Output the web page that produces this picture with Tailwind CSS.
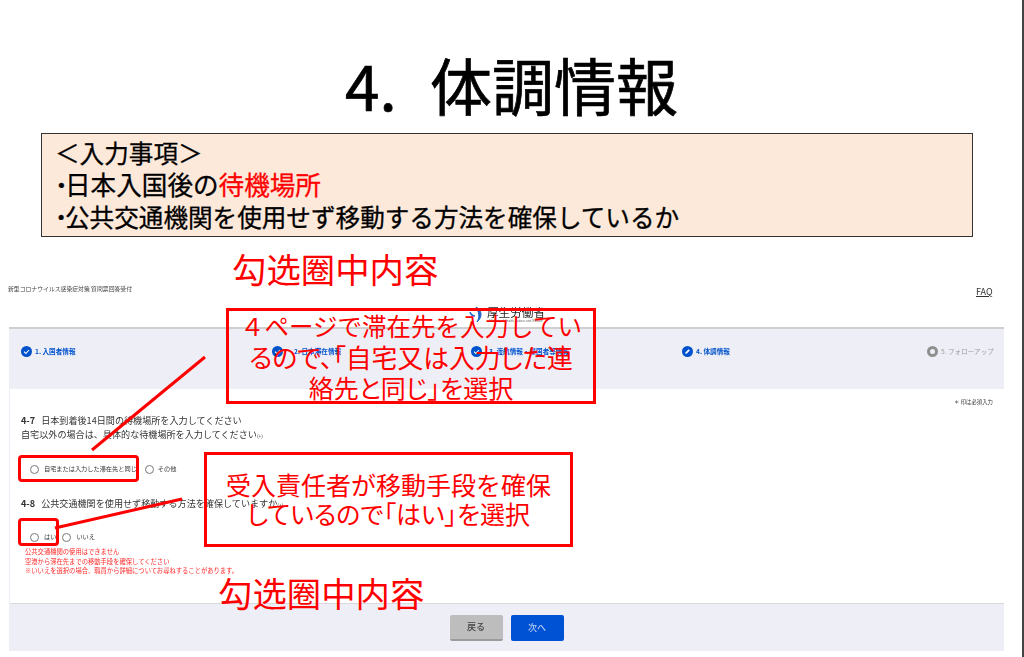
<!DOCTYPE html>
<html lang="ja">
<head>
  <meta charset="UTF-8">
  <title>4. 体調情報</title>
  <script src="https://cdn.jsdelivr.net/npm/@tailwindcss/browser@4"></script>
</head>
<body class="relative w-[1024px] h-[657px] overflow-hidden bg-white font-['Noto_Sans_CJK_JP',sans-serif] text-black">

  <!-- Slide title -->
  <h1 class="h-[133px] pt-[40px] pl-[345px] text-[62px] leading-[88px] font-normal [-webkit-text-stroke-width:0.7px] whitespace-nowrap"><span class="inline-block w-[85px]">4.</span>体調情報</h1>

  <!-- Input items box -->
  <div class="ml-[41px] w-[932px] h-[104px] border border-[#333] bg-[#fce9da] pl-[13px] pt-[2px] text-[24.6px] leading-[32px] [-webkit-text-stroke-width:0.3px] whitespace-nowrap">
    <p>＜入力事項＞</p>
    <p class="flex text-[25.6px]"><span class="w-[10px] font-bold">･</span>日本入国後の<span class="text-[#ff0000]">待機場所</span></p>
    <p class="flex"><span class="w-[10px] font-bold">･</span>公共交通機関を使用せず移動する方法を確保しているか</p>
  </div>

  <!-- Embedded form screenshot -->
  <div class="blur-[0.4px]">
    <div class="h-[90px] flex items-start pl-[8px] pt-[47px]">
      <p class="w-[460px] text-[5.85px] leading-[9px] text-[#444] whitespace-nowrap">新型コロナウイルス感染症対策 質問票回答受付</p>
      <div class="flex items-center gap-[2px] mt-[22px]">
        <svg class="w-[17px] h-[19px]" viewBox="0 0 17 19"><path d="M8 1c6 3 7 10 1 15 3-5 2-10-1-15z" fill="#1c63c4" stroke="#1c63c4" stroke-width="1"/><path d="M2 6c1 3 3 4 5 4" fill="none" stroke="#1c63c4" stroke-width="1.5"/></svg>
        <div class="flex flex-col items-center -mt-[2px]">
          <span class="text-[11.6px] leading-[13px] text-[#222] whitespace-nowrap">厚生労働省</span>
          <span class="text-[3px] leading-[4px] text-[#666] whitespace-nowrap">Ministry of Health, Labour and Welfare</span>
        </div>
      </div>
      <a class="ml-[431px] mt-[2px] text-[9px] leading-[11px] text-[#333] underline">FAQ</a>
    </div>

    <div class="ml-[9px] w-[995px] h-[324px] bg-[#eeeff6] border-t-2 border-[#cfcfcf] flex flex-col">
      <!-- Steps -->
      <div class="h-[60px] shrink-0 pl-[12px] pt-[17px] grid grid-cols-[251px_199px_211px_245px_auto] items-start text-[6.6px] font-bold text-[#0052cc] whitespace-nowrap">
        <div class="flex items-center gap-[3px]">
          <svg class="w-[11px] h-[11px]" viewBox="0 0 11 11"><circle cx="5.5" cy="5.5" r="5.5" fill="#0052cc"/><path d="M3 5.7l1.8 1.8L8 4" fill="none" stroke="#fff" stroke-width="1.1"/></svg>
          <span>1. 入国者情報</span>
        </div>
        <div class="flex items-center gap-[11px]">
          <svg class="w-[11px] h-[11px]" viewBox="0 0 11 11"><circle cx="5.5" cy="5.5" r="5.5" fill="#0052cc"/><path d="M3 5.7l1.8 1.8L8 4" fill="none" stroke="#fff" stroke-width="1.1"/></svg>
          <span>2. 日本滞在情報</span>
        </div>
        <div class="flex items-center gap-[7px]">
          <svg class="w-[11px] h-[11px]" viewBox="0 0 11 11"><circle cx="5.5" cy="5.5" r="5.5" fill="#0052cc"/><path d="M3 5.7l1.8 1.8L8 4" fill="none" stroke="#fff" stroke-width="1.1"/></svg>
          <span>3. 渡航情報・帰国者等情報</span>
        </div>
        <div class="flex items-center gap-[3px]">
          <svg class="w-[11px] h-[11px]" viewBox="0 0 11 11"><circle cx="5.5" cy="5.5" r="5.5" fill="#0052cc"/><path d="M3.2 7.8l.4-1.6 3-3 1.2 1.2-3 3z" fill="#fff"/></svg>
          <span>4. 体調情報</span>
        </div>
        <div class="flex items-center gap-[3px] font-normal text-[#9a9a9a]">
          <span class="w-[11px] h-[11px] rounded-full border-[3px] border-[#8f8f8f] bg-[#eeeff6]"></span>
          <span>5. フォローアップ</span>
        </div>
      </div>

      <!-- Question card -->
      <div class="ml-[1px] h-[215px] shrink-0 bg-white border-b border-[#d8d8de] pl-[11px] pr-[11px] pt-[9px] text-[#333]">
        <p class="text-right text-[5.4px] leading-[8px]">＊ 印は必須入力</p>
        <p class="mt-[7px] text-[9.1px] leading-[14px] whitespace-nowrap"><b class="mr-[4px]">4-7</b> 日本到着後14日間の待機場所を入力してください</p>
        <p class="text-[9.1px] leading-[14px] whitespace-nowrap">自宅以外の場合は、具体的な待機場所を入力してください<span class="text-[5px]">(+)</span></p>
        <div class="mt-[19px] pl-[9px] flex items-center h-[14px] text-[6.2px] whitespace-nowrap">
          <span class="w-[9px] h-[9px] rounded-full border border-[#777]"></span>
          <span class="ml-[5px]">自宅または入力した滞在先と同じ</span>
          <span class="ml-[8px] w-[9px] h-[9px] rounded-full border border-[#777]"></span>
          <span class="ml-[4px]">その他</span>
        </div>
        <p class="mt-[20px] text-[9.1px] leading-[14px] whitespace-nowrap"><b class="mr-[4px]">4-8</b> 公共交通機関を使用せず移動する方法を確保していますか<span class="text-[5px]">(+)</span></p>
        <div class="mt-[18px] pl-[9px] flex items-center h-[14px] text-[6.2px] whitespace-nowrap">
          <span class="w-[9px] h-[9px] rounded-full border border-[#777]"></span>
          <span class="ml-[5px]">はい</span>
          <span class="ml-[6px] w-[9px] h-[9px] rounded-full border border-[#777]"></span>
          <span class="ml-[5px]">いいえ</span>
        </div>
        <div class="mt-[3px] pl-[4px] text-[6.3px] leading-[9.5px] text-[#ff2a2a] whitespace-nowrap">
          <p>公共交通機関の使用はできません</p>
          <p>空港から滞在先までの移動手段を確保してください</p>
          <p>※いいえを選択の場合、職員から詳細についてお尋ねすることがあります。</p>
        </div>
      </div>

      <!-- Buttons -->
      <div class="flex justify-center gap-[8px] pt-[11px] text-[9px] font-medium">
        <button class="w-[53px] h-[26px] rounded-[2px] bg-[#bdbdbd] border-b-2 border-[#9c9c9c] text-[#444]">戻る</button>
        <button class="w-[53px] h-[26px] rounded-[2px] bg-[#0052d4] text-[#b9cdf2]">次へ</button>
      </div>
    </div>
  </div>

  <!-- Right edge of the slide -->
  <div class="absolute right-0 top-0 w-[2px] h-full bg-[#444]"></div>

  <!-- Red annotations over the form -->
  <svg class="absolute left-0 top-0 w-[1024px] h-[657px] pointer-events-none" viewBox="0 0 1024 657">
    <path d="M205 357L92 450M55 528L182 499" fill="none" stroke="#ff0000" stroke-width="3"/>
  </svg>
  <p class="absolute left-[232px] top-[243px] text-[34.4px] leading-[50px] text-[#ff0000] font-['Noto_Sans_CJK_SC',sans-serif]">勾选圈中内容</p>
  <p class="absolute left-[218px] top-[567px] text-[34.4px] leading-[50px] text-[#ff0000] font-['Noto_Sans_CJK_SC',sans-serif]">勾选圈中内容</p>
  <div class="absolute left-[226px] top-[308px] w-[370px] h-[96px] border-[3px] border-[#ff0000] text-center text-[25px] leading-[31px] text-[#ff0000] whitespace-nowrap">
    <p class="-mt-[1px] text-[24.5px]">４ページで滞在先を入力してい</p>
    <p class="text-[25.8px] [font-feature-settings:'palt']">るので、「自宅又は入力した連</p>
    <p class="[font-feature-settings:'palt']">絡先と同じ」を選択</p>
  </div>
  <div class="absolute left-[204px] top-[452px] w-[369px] h-[95px] border-[3px] border-[#ff0000] pt-[15px] text-center text-[25px] leading-[29px] text-[#ff0000] whitespace-nowrap">
    <p>受入責任者が移動手段を確保</p>
    <p class="[font-feature-settings:'palt']">しているので「はい」を選択</p>
  </div>
  <div class="absolute left-[18px] top-[455px] w-[121px] h-[27px] rounded-[4px] border-[3px] border-[#ff0000]"></div>
  <div class="absolute left-[18px] top-[518px] w-[41px] h-[28px] rounded-[4px] border-[3px] border-[#ff0000]"></div>
</body>
</html>
